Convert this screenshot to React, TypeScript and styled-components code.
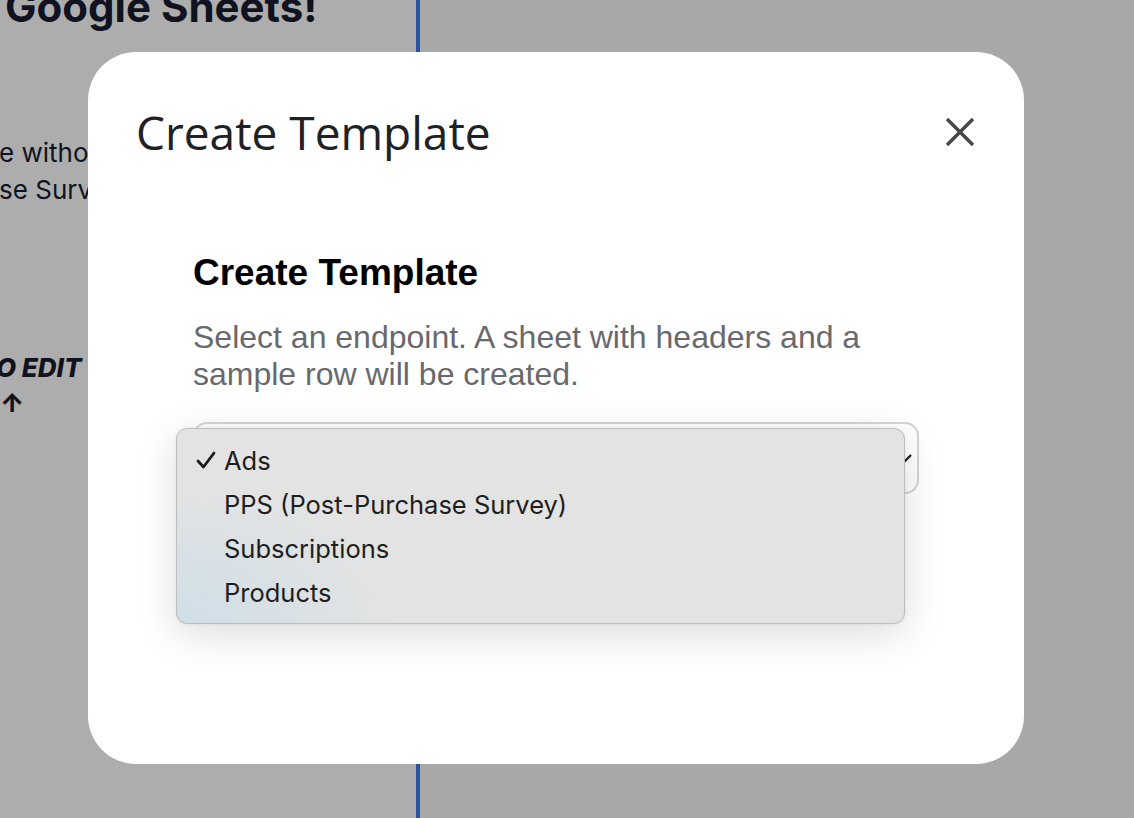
import styled, { createGlobalStyle } from "styled-components";

const ENDPOINTS = ["Ads", "PPS (Post-Purchase Survey)", "Subscriptions", "Products"];

const GlobalStyle = createGlobalStyle`
    html, body {
        margin: 0;
        padding: 0;
        overflow: hidden;
    }

    body {
        font-family: Inter, "Liberation Sans", sans-serif;
    }
`;

const Page = styled.div`
    display: flex;
    width: 1134px;
    height: 818px;
`;

const LeftPanel = styled.div`
    width: 416px;
    flex: 0 0 416px;
    background: #adadad;
    color: #10131f;
    overflow: hidden;
    display: flex;
    flex-direction: column;
`;

const Headline = styled.h1`
    margin: -16px 0 0 5px;
    font-size: 42px;
    font-weight: 700;
    line-height: 46px;
    white-space: nowrap;
`;

const Lead = styled.p`
    margin: 104px 0 0 -1px;
    font-size: 26px;
    line-height: 37px;
    white-space: nowrap;
`;

const Callout = styled.div`
    margin: 142px 0 0 -4px;
    font-size: 26px;
    font-weight: 800;
    font-style: italic;
    line-height: 35px;
    white-space: nowrap;
`;

const Arrow = styled.span`
    font-style: normal;
    margin-left: 4px;
`;

const Divider = styled.div`
    width: 4px;
    flex: 0 0 4px;
    background: #2b54a2;
`;

const RightPanel = styled.div`
    flex: 1;
    background: #a8a9a6;
`;

const Overlay = styled.div`
    position: fixed;
    inset: 0;
    padding: 52px 0 0 88px;
`;

const Modal = styled.div`
    width: 936px;
    height: 712px;
    box-sizing: border-box;
    background: #ffffff;
    border-radius: 48px;
    padding: 52px 44px 0 48px;
`;

const ModalHeader = styled.div`
    display: flex;
    justify-content: space-between;
    align-items: center;
`;

const ModalTitle = styled.h2`
    margin: 0;
    font-family: "Open Sans", Roboto, sans-serif;
    font-size: 46px;
    font-weight: 400;
    color: #202124;
    line-height: 56px;
`;

const CloseButton = styled.button`
    border: none;
    background: none;
    padding: 0;
    width: 40px;
    height: 40px;
    display: flex;
    align-items: center;
    justify-content: center;
    color: #444746;
    cursor: pointer;
`;

const Body = styled.div`
    padding: 93px 0 0 57px;
    width: 726px;
`;

const SectionTitle = styled.h3`
    margin: 0;
    font-family: "Liberation Sans", Arial, sans-serif;
    font-size: 37px;
    font-weight: 700;
    color: #000;
    line-height: 40px;
`;

const Description = styled.p`
    margin: 26px 0 0;
    font-family: "Liberation Sans", Arial, sans-serif;
    font-size: 32px;
    line-height: 37px;
    color: #68696d;
`;

const SelectWrap = styled.div`
    position: relative;
    margin-top: 29px;
`;

const SelectBox = styled.div`
    height: 72px;
    box-sizing: border-box;
    border: 2px solid #d5d5d5;
    border-radius: 14px;
    display: flex;
    align-items: center;
    justify-content: flex-end;
    padding-right: 4px;
`;

const Menu = styled.ul`
    position: absolute;
    left: -17px;
    top: 6px;
    width: 729px;
    height: 196px;
    box-sizing: border-box;
    margin: 0;
    padding: 9px 0 0;
    list-style: none;
    border: 1px solid #bdbdbd;
    border-radius: 11px;
    background:
        radial-gradient(ellipse 220px 140px at 0% 100%, rgba(205, 222, 232, 0.9), rgba(227, 227, 227, 0)),
        #e3e3e3;
    box-shadow: 0 10px 40px rgba(0, 0, 0, 0.14), 0 0 4px rgba(0, 0, 0, 0.06);
`;

const MenuItem = styled.li`
    display: flex;
    align-items: center;
    height: 44px;
    font-family: Inter, "Liberation Sans", sans-serif;
    font-size: 25.5px;
    color: #1e1e1e;
`;

const Check = styled.span<{ $visible: boolean }>`
    width: 47px;
    flex: 0 0 47px;
    display: flex;
    justify-content: flex-end;
    padding-right: 8px;
    box-sizing: border-box;
    visibility: ${(p) => (p.$visible ? "visible" : "hidden")};
`;

export default function App(): JSX.Element {
    const selected = "Ads";

    return (
        <>
            <GlobalStyle />
            <Page>
                <LeftPanel>
                    <Headline>Google Sheets!</Headline>
                    <Lead>
                        e without
                        <br />
                        se Survey
                    </Lead>
                    <Callout>
                        O EDIT
                        <br />
                        <Arrow>↑</Arrow>
                    </Callout>
                </LeftPanel>
                <Divider />
                <RightPanel />
            </Page>
            <Overlay>
                <Modal>
                    <ModalHeader>
                        <ModalTitle>Create Template</ModalTitle>
                        <CloseButton aria-label="Close">
                            <svg width="30" height="30" viewBox="0 0 30 30">
                                <path
                                    d="M2 2 L28 28 M28 2 L2 28"
                                    stroke="currentColor"
                                    strokeWidth="3.4"
                                />
                            </svg>
                        </CloseButton>
                    </ModalHeader>
                    <Body>
                        <SectionTitle>Create Template</SectionTitle>
                        <Description>
                            Select an endpoint. A sheet with headers and a sample row will be
                            created.
                        </Description>
                        <SelectWrap>
                            <SelectBox>
                                <svg width="16" height="12" viewBox="0 0 16 12">
                                    <path
                                        d="M2 3 L8 9 L14 3"
                                        fill="none"
                                        stroke="#1a1a1a"
                                        strokeWidth="2.2"
                                    />
                                </svg>
                            </SelectBox>
                            <Menu>
                                {ENDPOINTS.map((endpoint) => (
                                    <MenuItem key={endpoint}>
                                        <Check $visible={endpoint === selected}>
                                            <svg width="20" height="18" viewBox="0 0 20 18">
                                                <path
                                                    d="M2 10 L7.5 16 L18 2"
                                                    fill="none"
                                                    stroke="#1a1a1a"
                                                    strokeWidth="2.8"
                                                    strokeLinecap="round"
                                                    strokeLinejoin="round"
                                                />
                                            </svg>
                                        </Check>
                                        {endpoint}
                                    </MenuItem>
                                ))}
                            </Menu>
                        </SelectWrap>
                    </Body>
                </Modal>
            </Overlay>
        </>
    );
}
